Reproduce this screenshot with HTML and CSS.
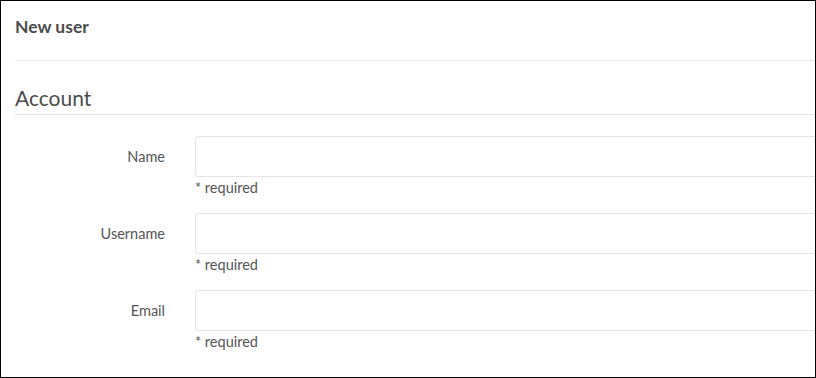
FILE: index.html
```html
<!DOCTYPE html>
<html>
<head>
<meta charset="utf-8">
<link rel="stylesheet" href="styles.css">
</head>
<body>
<div class="frame">
  <div class="content">
    <div class="page-title">New user</div>
    <h3 class="section-title">Account</h3>
    <form class="form">
      <div class="row">
        <label class="label">Name</label>
        <div class="field">
          <div class="input"></div>
          <div class="hint">* required</div>
        </div>
      </div>
      <div class="row">
        <label class="label">Username</label>
        <div class="field">
          <div class="input"></div>
          <div class="hint">* required</div>
        </div>
      </div>
      <div class="row">
        <label class="label">Email</label>
        <div class="field">
          <div class="input"></div>
          <div class="hint">* required</div>
        </div>
      </div>
    </form>
  </div>
</div>
</body>
</html>
```

FILE: styles.css
```css
html, body {
  margin: 0;
  padding: 0;
  background: #fff;
}
.frame {
  width: 816px;
  height: 378px;
  box-sizing: border-box;
  border: 1px solid #000;
  overflow: hidden;
  font-family: Lato, "Open Sans", sans-serif;
  color: #4c4c4c;
}
.content {
  width: 830px;
  padding-left: 14px;
}
.page-title {
  height: 60px;
  box-sizing: border-box;
  padding-top: 16px;
  font-size: 17.5px;
  font-weight: 700;
  line-height: 20px;
  border-bottom: 1px solid #e8e8e8;
}
.section-title {
  margin: 0;
  padding-top: 24px;
  height: 54px;
  box-sizing: border-box;
  font-size: 21px;
  font-weight: 400;
  line-height: 26px;
  border-bottom: 1px solid #e5e5e5;
}
.form {
  display: flex;
  flex-direction: column;
  gap: 15px;
  padding-top: 21px;
}
.row {
  display: flex;
  align-items: flex-start;
}
.label {
  width: 150px;
  text-align: right;
  font-size: 14.5px;
  line-height: 20px;
  padding-top: 11px;
  color: #555;
}
.field {
  flex: 1;
  margin-left: 30px;
}
.input {
  height: 41px;
  box-sizing: border-box;
  border: 1px solid #e5e5e5;
  border-radius: 3px;
}
.hint {
  padding-top: 1px;
  font-size: 14.5px;
  line-height: 20px;
  color: #555;
}
```
